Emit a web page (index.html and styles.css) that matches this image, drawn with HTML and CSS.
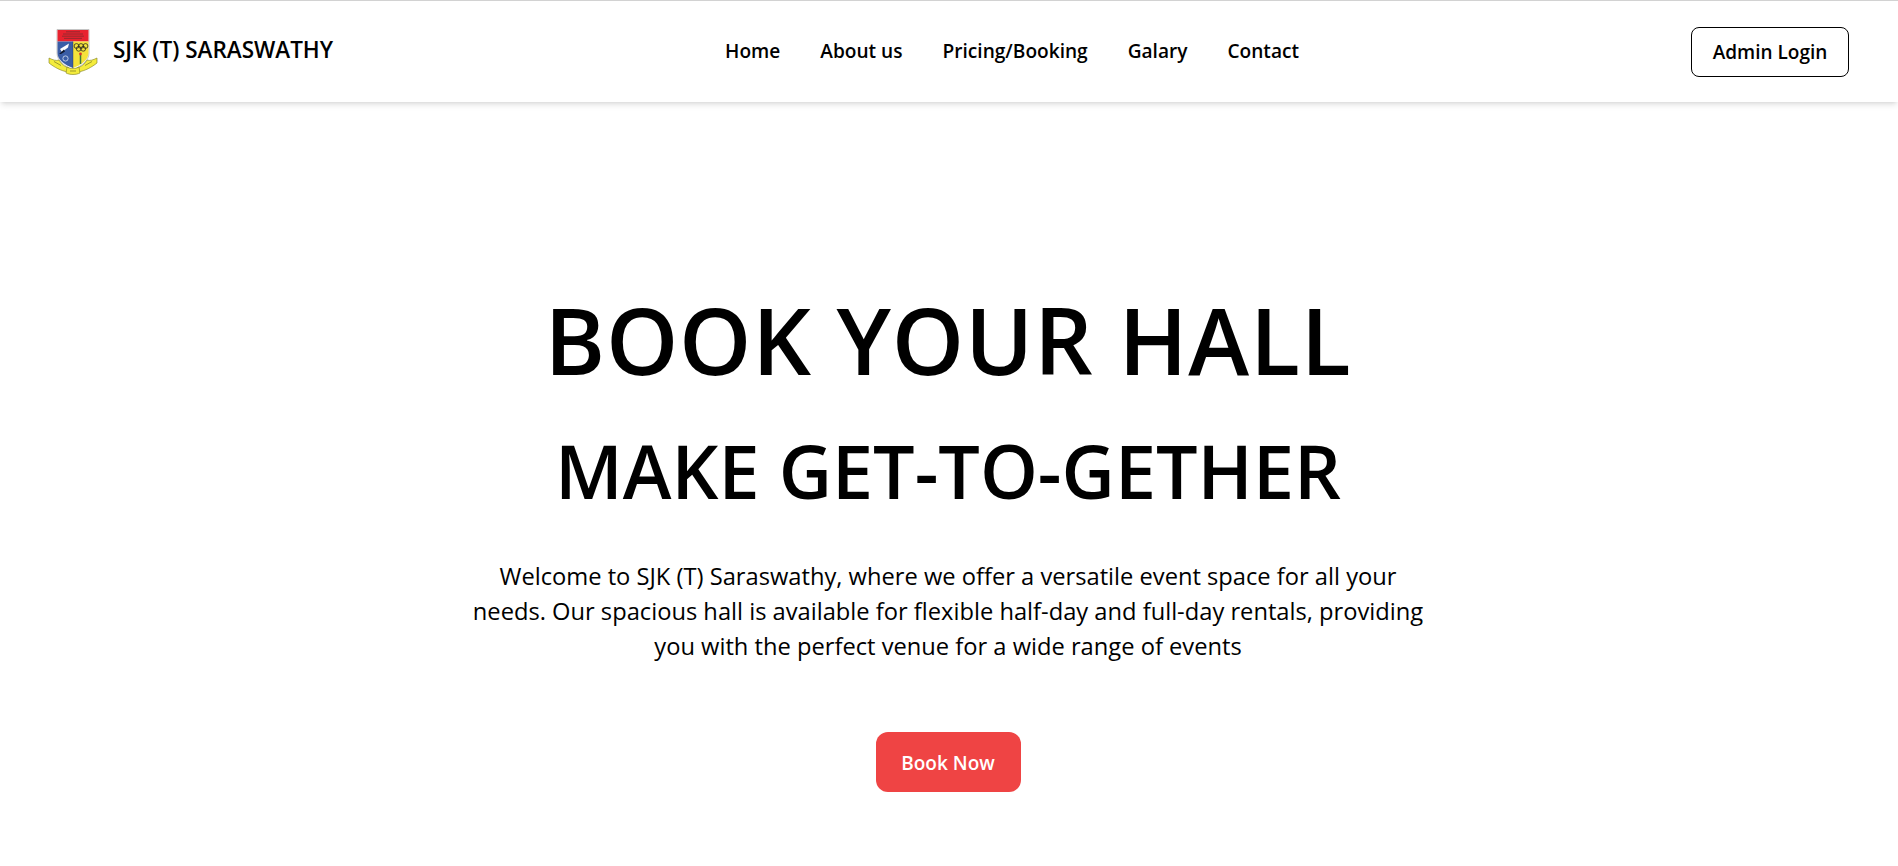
FILE: index.html
```html
<!DOCTYPE html>
<html lang="en">
<head>
<meta charset="utf-8">
<title>SJK (T) Saraswathy</title>
<link rel="stylesheet" href="styles.css">
</head>
<body>
<header class="navbar">
  <a class="brand" href="#">
    <svg class="logo" viewBox="0 0 50 46" width="50" height="46" aria-hidden="true">
      <path d="M9 0.500H41V24C41 32 33 37 25 41C17 37 9 32 9 24Z" fill="#fff" stroke="#b5b5b5" stroke-width=".8"/>
      <path d="M9.500 1H40.500V12.500H9.500Z" fill="#e8222f"/>
      <path d="M18 2.800H32M15 5H35M14 7.200H36M16 9.400H34" stroke="#8c2a30" stroke-width=".9"/>
      <path d="M9.500 12.500H25V39C17 36 9.500 31 9.500 24Z" fill="#3a5da6"/>
      <path d="M25 12.500H40.500V24C40.500 31 33 36 25 39Z" fill="#f5e23a"/>
      <path d="M25 12.500V39" stroke="#20305a" stroke-width=".4"/>
      <path d="M12 20L21 14.500L20 18.500L14 23Z" fill="#fff"/>
      <path d="M11 25L16 20.500L17 22.500L13 25Z" fill="#10182c"/>
      <circle cx="17.500" cy="29.500" r="2.600" fill="none" stroke="#d8e2f4" stroke-width=".8"/>
      <g fill="none" stroke="#2a2a20" stroke-width=".8">
        <circle cx="28.500" cy="17" r="2.400"/><circle cx="33" cy="17" r="2.400"/><circle cx="37.500" cy="17" r="2.400"/>
        <circle cx="30.700" cy="19.800" r="2.400"/><circle cx="35.200" cy="19.800" r="2.400"/>
      </g>
      <path d="M32.500 26V35" stroke="#3b7a3a" stroke-width="1.500"/>
      <circle cx="32.500" cy="25" r="1.400" fill="#d8322e"/>
      <g fill="#f4ec3c" stroke="#7d7d22" stroke-width=".6">
        <path d="M1 29C5 31 8 32 11 31C13 35 17 38 21 39L20 43C13 42 6 38 1 34Z"/>
        <path d="M49 29C45 31 42 32 39 31C37 35 33 38 29 39L30 43C37 42 44 38 49 34Z"/>
        <path d="M19 38C22 40 28 40 31 38L32 44C28 46 22 46 18 44Z"/>
      </g>
      <path d="M6 32.500L13 36.500M37 36.500L44 32.500M22 42H28" stroke="#77771f" stroke-width=".7"/>
    </svg>
    <span class="brand-name">SJK (T) SARASWATHY</span>
  </a>
  <nav class="nav-links">
    <a href="#">Home</a>
    <a href="#">About us</a>
    <a href="#">Pricing/Booking</a>
    <a href="#">Galary</a>
    <a href="#">Contact</a>
  </nav>
  <a class="login" href="#">Admin Login</a>
</header>
<main class="hero">
  <h1 class="hero-title">BOOK YOUR HALL</h1>
  <h2 class="hero-subtitle">MAKE GET-TO-GETHER</h2>
  <p class="hero-text">Welcome to SJK (T) Saraswathy, where we offer a versatile event space for all your needs. Our spacious hall is available for flexible half-day and full-day rentals, providing you with the perfect venue for a wide range of events</p>
  <a class="cta" href="#">Book Now</a>
</main>
</body>
</html>
```
FILE: styles.css
```css
* { box-sizing: border-box; }
html, body { margin: 0; height: 100%; }
body {
  background: #fff;
  color: #000;
  font-family: "Open Sans", "Noto Sans", sans-serif;
  overflow: hidden;
  border-top: 1px solid #d2d2d2;
}
a { color: inherit; text-decoration: none; }
.navbar {
  height: 101px;
  display: flex;
  justify-content: space-between;
  align-items: center;
  padding: 0 49px 0 48px;
  background: #fff;
  box-shadow: 0 4px 6px -1px rgba(0,0,0,.1), 0 2px 4px -2px rgba(0,0,0,.1);
}
.brand { display: flex; align-items: center; gap: 15px; }
.logo { display: block; filter: blur(.35px); }
.brand-name { font-size: 22.500px; font-weight: 600; line-height: 28px; margin-top: -3px; }
.nav-links { display: flex; gap: 40px; font-size: 19.100px; font-weight: 600; line-height: 24px; margin-top: -2px; }
.login {
  width: 158px;
  height: 50px;
  display: flex;
  align-items: center;
  justify-content: center;
  border: 1px solid #000;
  border-radius: 8px;
  font-size: 19px;
  font-weight: 600;
  margin-top: 1px;
}
.hero { display: flex; flex-direction: column; align-items: center; padding: 190px 2px 0 0; text-align: center; }
.hero-title { margin: 0; font-size: 92px; font-weight: 600; line-height: 96px; letter-spacing: .8px; }
.hero-subtitle { margin: 47px 0 0; font-size: 73.600px; font-weight: 600; line-height: 72px; }
.hero-text { margin: 52px 0 0; width: 960px; font-size: 23.700px; line-height: 35px; }
.cta {
  margin-top: 68px;
  width: 145px;
  height: 60px;
  padding-top: 2px;
  display: flex;
  align-items: center;
  justify-content: center;
  background: #ef4444;
  color: #fff;
  border-radius: 12px;
  font-size: 19px;
  font-weight: 600;
}
```
